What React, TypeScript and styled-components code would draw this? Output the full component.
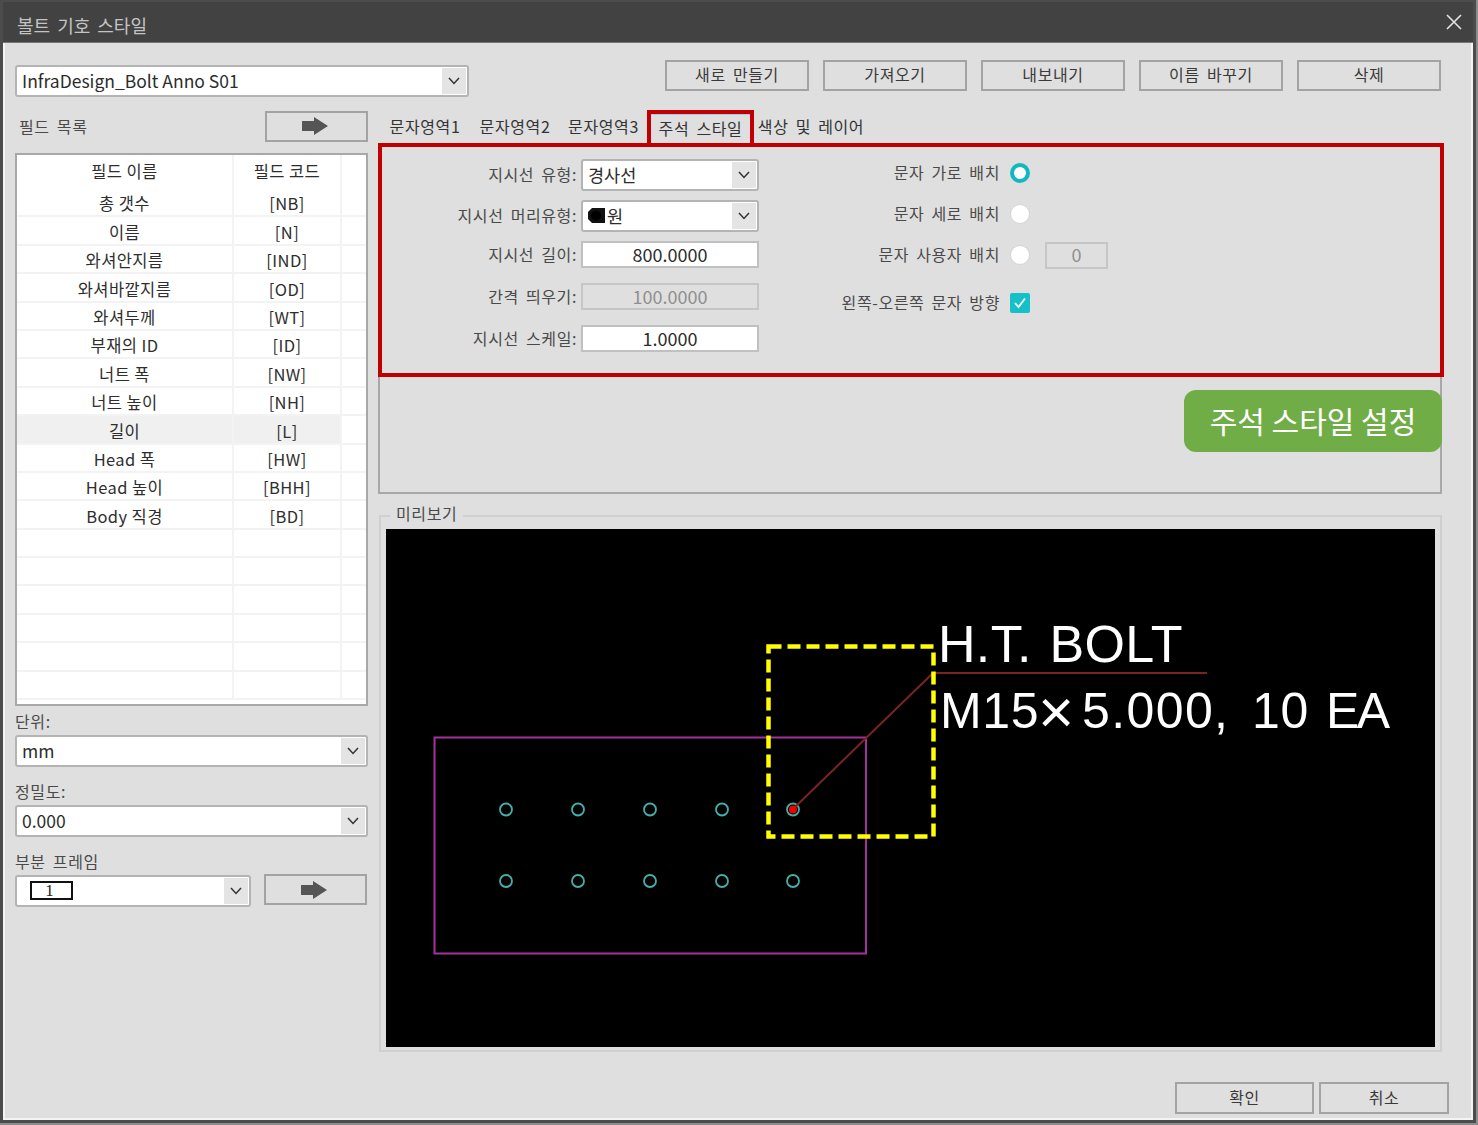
import React from "react";
import styled, { createGlobalStyle } from "styled-components";

const GlobalStyle = createGlobalStyle`
  html, body {
    margin: 0;
    padding: 0;
    background: #8c8c8c;
  }
  * {
    box-sizing: border-box;
  }
  body {
    font-family: "Noto Sans CJK KR", "Noto Sans", sans-serif;
    letter-spacing: 0.6px;
    word-spacing: 3px;
    color: #333;
  }
`;

const Page = styled.div`
  width: 1478px;
  height: 1125px;
  background: #8c8c8c;
`;

const Dialog = styled.div`
  width: 1476px;
  height: 1123px;
  border: 3px solid #4c4c4c;
  border-top-width: 2px;
  background: #dfdfdf;
  display: flex;
  flex-direction: column;
  overflow: hidden;
`;

const TitleBar = styled.div`
  height: 41px;
  flex: none;
  background: #424242;
  color: #c4c4c4;
  font-size: 18px;
  letter-spacing: 0;
  display: flex;
  align-items: center;
  justify-content: space-between;
  padding: 6px 11px 0 14px;
  border-bottom: 1px solid #777;
`;

const CloseIcon = styled.svg`
  margin-top: -6px;
`;

const Body = styled.div`
  flex: 1;
  padding: 17px 0 0 10px;
  border-left: 2px solid #f4f4f4;
  border-right: 2px solid #f4f4f4;
  border-bottom: 2px solid #f4f4f4;
  display: flex;
  flex-direction: column;
`;

const TopRow = styled.div`
  display: flex;
  height: 50px;
  align-items: flex-start;
`;

const ButtonGroup = styled.div`
  display: flex;
  gap: 14px;
  margin-left: 196px;
`;

const Button = styled.button<{ $w: number; $h?: number }>`
  width: ${(p) => p.$w}px;
  height: ${(p) => p.$h ?? 31}px;
  flex: none;
  padding: 0 0 3px;
  background: #dfdfdf;
  border: 2px solid #a3a3a3;
  color: #3a3a3a;
  font-family: inherit;
  font-size: 16px;
  letter-spacing: inherit;
  word-spacing: inherit;
  display: flex;
  align-items: center;
  justify-content: center;
`;

const ArrowButton = styled(Button)<{ $lift?: boolean }>`
  padding: 0 3px 0 0;
  margin-top: ${(p) => (p.$lift ? "-1px" : "0")};
`;

const Combo = styled.div<{ $w: number; $mt?: number }>`
  width: ${(p) => p.$w}px;
  height: 32px;
  margin-top: ${(p) => p.$mt ?? 0}px;
  flex: none;
  background: #fff;
  border: 2px solid #b4b4b4;
  border-radius: 3px;
  display: flex;
  align-items: center;
  padding-left: 5px;
  font-size: 17.5px;
  letter-spacing: 0;
  word-spacing: 0;
  color: #2c2c2c;
`;

const ComboValue = styled.div`
  flex: 1;
  display: flex;
  align-items: center;
  gap: 1px;
  padding-bottom: 1px;
  white-space: nowrap;
`;

const ComboArrow = styled.div`
  width: 24px;
  height: 26px;
  margin-right: 1px;
  background: #e4e4e4;
  display: flex;
  align-items: center;
  justify-content: center;
  flex: none;
`;

const Columns = styled.div`
  display: flex;
  gap: 10px;
`;

const LeftColumn = styled.div`
  width: 353px;
  flex: none;
`;

const FieldHead = styled.div`
  display: flex;
  align-items: center;
  justify-content: space-between;
  height: 32px;
  margin-bottom: 11px;
  padding-left: 4px;
  font-size: 16px;
  color: #4a4a4a;
`;

const FieldTable = styled.div`
  height: 553px;
  background: #fff;
  border: 2px solid #a8a8a8;
  overflow: hidden;
`;

const TableRow = styled.div<{ $head?: boolean }>`
  display: grid;
  grid-template-columns: 217px 108px 1fr;
  height: ${(p) => (p.$head ? "34px" : "28.4px")};
  border-bottom: ${(p) => (p.$head ? "none" : "2px solid #f3f3f3")};
  font-size: 16.5px;
  letter-spacing: 0.4px;
  word-spacing: 0;
  line-height: 1;
  color: #2e2e2e;
`;

const TableCell = styled.div<{ $selected?: boolean; $edge?: boolean; $head?: boolean }>`
  display: flex;
  align-items: center;
  justify-content: center;
  white-space: nowrap;
  padding: ${(p) => (p.$head ? "0 0 2px" : "3px 0 0")};
  background: ${(p) => (p.$selected ? "#f0f0f0" : "transparent")};
  border-right: ${(p) => (p.$edge ? "none" : "2px solid #f3f3f3")};
`;

const FieldGroup = styled.div<{ $mt: number }>`
  margin-top: ${(p) => p.$mt}px;
`;

const FieldLabel = styled.div`
  height: 20px;
  margin-bottom: 4px;
  font-size: 16px;
  line-height: 20px;
  color: #4a4a4a;
`;

const FrameRow = styled.div`
  display: flex;
  align-items: flex-start;
  justify-content: space-between;
  width: 352px;
`;

const FrameSwatch = styled.span`
  width: 43px;
  height: 19px;
  margin-left: 8px;
  padding-right: 4px;
  border: 2px solid #111;
  display: flex;
  align-items: center;
  justify-content: center;
  font-family: "Liberation Serif", serif;
  font-size: 17px;
  line-height: 15px;
  color: #222;
`;

const RightColumn = styled.div`
  width: 1064px;
  flex: none;
`;

const TabBar = styled.div`
  display: flex;
  height: 33px;
  padding-left: 2px;
  align-items: stretch;
`;

const Tab = styled.div<{ $w: number; $active?: boolean }>`
  width: ${(p) => p.$w}px;
  flex: none;
  display: flex;
  align-items: center;
  justify-content: center;
  font-size: 16px;
  white-space: nowrap;
  color: #333;
  border: ${(p) => (p.$active ? "4px solid #c00000" : "none")};
  border-bottom: none;
  box-shadow: ${(p) => (p.$active ? "inset 0 1px 0 #a9c8ea" : "none")};
  padding-bottom: 2px;
`;

const TabPane = styled.div`
  position: relative;
  height: 351px;
  border: 2px solid #a8a8a8;
  border-top: none;
`;

const FormBox = styled.div`
  height: 234px;
  margin: 0 -4px 0 -2px;
  border: 4px solid #c00000;
  display: flex;
`;

const FormLeft = styled.div`
  width: 377px;
  flex: none;
  padding-top: 12px;
  display: flex;
  flex-direction: column;
`;

const FormRow = styled.div<{ $mt?: number }>`
  display: flex;
  align-items: center;
  gap: 4px;
  margin-top: ${(p) => p.$mt ?? 0}px;
`;

const FormLabel = styled.div<{ $low?: boolean }>`
  width: 195px;
  flex: none;
  padding-bottom: ${(p) => (p.$low ? "1px" : "3px")};
  text-align: right;
  font-size: 16px;
  color: #4a4a4a;
  white-space: nowrap;
`;

const NumberInput = styled.div<{ $w?: number; $disabled?: boolean }>`
  width: ${(p) => p.$w ?? 178}px;
  height: 27px;
  flex: none;
  padding-bottom: 2px;
  background: ${(p) => (p.$disabled ? "#dfdfdf" : "#fff")};
  border: 2px solid ${(p) => (p.$disabled ? "#c6c6c6" : "#c0c0c0")};
  display: flex;
  align-items: center;
  justify-content: center;
  font-size: 18px;
  letter-spacing: 0;
  color: ${(p) => (p.$disabled ? "#8f8f8f" : "#2c2c2c")};
`;

const FormRight = styled.div`
  padding-top: 10px;
  display: flex;
  flex-direction: column;
`;

const OptionRow = styled.div<{ $mt?: number }>`
  height: 32px;
  margin-top: ${(p) => p.$mt ?? 0}px;
  display: flex;
  align-items: center;
`;

const OptionLabel = styled.div`
  width: 241px;
  flex: none;
  padding-bottom: 2px;
  text-align: right;
  font-size: 16px;
  color: #4a4a4a;
  white-space: nowrap;
`;

const Radio = styled.span<{ $on?: boolean }>`
  width: 20px;
  height: 20px;
  margin: 0 15px 0 10px;
  flex: none;
  border-radius: 50%;
  background: #fff;
  border: ${(p) => (p.$on ? "4px solid #12b8c0" : "1px solid #d4d4d4")};
`;

const CheckBox = styled.span`
  width: 20px;
  height: 20px;
  margin-left: 10px;
  flex: none;
  background: #14c1c9;
  border-radius: 2px;
  display: flex;
  align-items: center;
  justify-content: center;
`;

const Badge = styled.div`
  position: absolute;
  top: 247px;
  right: -2px;
  width: 258px;
  height: 62px;
  padding-bottom: 2px;
  background: #70ad47;
  border-radius: 12px;
  color: #fff;
  font-size: 30px;
  letter-spacing: 0;
  word-spacing: 0;
  display: flex;
  align-items: center;
  justify-content: center;
`;

const PreviewGroup = styled.div`
  position: relative;
  margin: 21px 0 0 1px;
  height: 537px;
  border: 2px solid #cfcfcf;
  padding: 12px 5px 3px 5px;
`;

const PreviewLegend = styled.div`
  position: absolute;
  top: -16px;
  left: 9px;
  padding: 0 6px;
  background: #dfdfdf;
  font-size: 16px;
  line-height: 24px;
  color: #4a4a4a;
`;

const Canvas = styled.svg`
  display: block;
  width: 1049px;
  height: 518px;
  background: #000;
`;

const Footer = styled.div`
  display: flex;
  justify-content: flex-end;
  gap: 5px;
  margin-top: 30px;
  padding-right: 22px;
`;

const Chevron = () => (
  <svg width="12" height="8" viewBox="0 0 12 8">
    <polyline points="1,1 6,6.5 11,1" fill="none" stroke="#333" strokeWidth="1.5" />
  </svg>
);

const BlockArrow = () => (
  <svg width="26" height="18" viewBox="0 0 26 18">
    <polygon points="0,4 12,4 12,0 26,9 12,18 12,14 0,14" fill="#555" />
  </svg>
);

const ComboBox = ({ w, mt, children }: { w: number; mt?: number; children: React.ReactNode }) => (
  <Combo $w={w} $mt={mt}>
    <ComboValue>{children}</ComboValue>
    <ComboArrow>
      <Chevron />
    </ComboArrow>
  </Combo>
);

const fields = [
  ["총 갯수", "[NB]"],
  ["이름", "[N]"],
  ["와셔안지름", "[IND]"],
  ["와셔바깥지름", "[OD]"],
  ["와셔두께", "[WT]"],
  ["부재의 ID", "[ID]"],
  ["너트 폭", "[NW]"],
  ["너트 높이", "[NH]"],
  ["길이", "[L]"],
  ["Head 폭", "[HW]"],
  ["Head 높이", "[BHH]"],
  ["Body 직경", "[BD]"],
  ["", ""],
  ["", ""],
  ["", ""],
  ["", ""],
  ["", ""],
  ["", ""],
];

const holeXs = [506, 578, 650, 722, 793];

const PreviewDrawing = () => (
  <Canvas viewBox="386 529 1049 518">
    <rect x="434.5" y="737.5" width="431.5" height="216" fill="none" stroke="#a3329c" strokeWidth="2" />
    {holeXs.map((x) => (
      <React.Fragment key={x}>
        <circle cx={x} cy="809.5" r="6" fill="none" stroke="#45aeaa" strokeWidth="1.8" />
        <circle cx={x} cy="881" r="6" fill="none" stroke="#45aeaa" strokeWidth="1.8" />
      </React.Fragment>
    ))}
    <polyline points="793,809 933,673 1207,673" fill="none" stroke="#7c2323" strokeWidth="2" />
    <circle cx="793" cy="809.5" r="4" fill="#f00000" />
    <rect x="768.5" y="646.5" width="165" height="190" fill="none" stroke="#ffff00" strokeWidth="4.5" strokeDasharray="13 6" />
    <text x="938" y="662" fill="#fff" fontFamily="Liberation Sans" fontSize="52" textLength="245">
      H.T. BOLT
    </text>
    <text y="728" fill="#fff" fontFamily="Liberation Sans" fontSize="50">
      <tspan x="940">M15</tspan>
      <tspan x="1038" fontSize="62" dy="5">×</tspan>
      <tspan x="1082" dy="-5" letterSpacing="1.4">5.000,</tspan>
      <tspan x="1252">10</tspan>
      <tspan x="1326" letterSpacing="-2.5">EA</tspan>
    </text>
  </Canvas>
);

export default function App() {
  return (
    <Page>
      <GlobalStyle />
      <Dialog>
        <TitleBar>
          <span>볼트 기호 스타일</span>
          <CloseIcon width="16" height="16" viewBox="0 0 16 16">
            <path d="M1 1 L15 15 M15 1 L1 15" stroke="#e4e4e4" strokeWidth="1.6" />
          </CloseIcon>
        </TitleBar>
        <Body>
          <TopRow>
            <ComboBox w={454} mt={5}>
              InfraDesign_Bolt Anno S01
            </ComboBox>
            <ButtonGroup>
              <Button $w={144}>새로 만들기</Button>
              <Button $w={144}>가져오기</Button>
              <Button $w={144}>내보내기</Button>
              <Button $w={144}>이름 바꾸기</Button>
              <Button $w={144}>삭제</Button>
            </ButtonGroup>
          </TopRow>
          <Columns>
            <LeftColumn>
              <FieldHead>
                <span>필드 목록</span>
                <ArrowButton $w={103}>
                  <BlockArrow />
                </ArrowButton>
              </FieldHead>
              <FieldTable>
                <TableRow $head>
                  <TableCell $head>필드 이름</TableCell>
                  <TableCell $head>필드 코드</TableCell>
                  <TableCell $edge />
                </TableRow>
                {fields.map(([name, code], i) => (
                  <TableRow key={i}>
                    <TableCell $selected={name === "길이"}>{name}</TableCell>
                    <TableCell $selected={name === "길이"}>{code}</TableCell>
                    <TableCell $edge />
                  </TableRow>
                ))}
              </FieldTable>
              <FieldGroup $mt={5}>
                <FieldLabel>단위:</FieldLabel>
                <ComboBox w={353}>mm</ComboBox>
              </FieldGroup>
              <FieldGroup $mt={14}>
                <FieldLabel>정밀도:</FieldLabel>
                <ComboBox w={353}>0.000</ComboBox>
              </FieldGroup>
              <FieldGroup $mt={14}>
                <FieldLabel>부분 프레임</FieldLabel>
                <FrameRow>
                  <ComboBox w={236}>
                    <FrameSwatch>1</FrameSwatch>
                  </ComboBox>
                  <ArrowButton $w={103} $lift>
                    <BlockArrow />
                  </ArrowButton>
                </FrameRow>
              </FieldGroup>
            </LeftColumn>
            <RightColumn>
              <TabBar>
                <Tab $w={90}>문자영역1</Tab>
                <Tab $w={90}>문자영역2</Tab>
                <Tab $w={87}>문자영역3</Tab>
                <Tab $w={107} $active>
                  주석 스타일
                </Tab>
                <Tab $w={114}>색상 및 레이어</Tab>
              </TabBar>
              <TabPane>
                <FormBox>
                  <FormLeft>
                    <FormRow>
                      <FormLabel>지시선 유형:</FormLabel>
                      <ComboBox w={178}>경사선</ComboBox>
                    </FormRow>
                    <FormRow $mt={9}>
                      <FormLabel>지시선 머리유형:</FormLabel>
                      <ComboBox w={178}>
                        <svg width="18" height="16" viewBox="0 0 18 16">
                          <rect width="17" height="15" fill="#111" />
                          <path d="M0 0 H4 L0 4 Z M0 15 H4 L0 11 Z" fill="#fff" />
                          <circle cx="8" cy="7.5" r="5" fill="#000" />
                        </svg>
                        원
                      </ComboBox>
                    </FormRow>
                    <FormRow $mt={9}>
                      <FormLabel $low>지시선 길이:</FormLabel>
                      <NumberInput>800.0000</NumberInput>
                    </FormRow>
                    <FormRow $mt={15}>
                      <FormLabel $low>간격 띄우기:</FormLabel>
                      <NumberInput $disabled>100.0000</NumberInput>
                    </FormRow>
                    <FormRow $mt={15}>
                      <FormLabel $low>지시선 스케일:</FormLabel>
                      <NumberInput>1.0000</NumberInput>
                    </FormRow>
                  </FormLeft>
                  <FormRight>
                    <OptionRow>
                      <OptionLabel>문자 가로 배치</OptionLabel>
                      <Radio $on />
                    </OptionRow>
                    <OptionRow $mt={9}>
                      <OptionLabel>문자 세로 배치</OptionLabel>
                      <Radio />
                    </OptionRow>
                    <OptionRow $mt={9}>
                      <OptionLabel>문자 사용자 배치</OptionLabel>
                      <Radio />
                      <NumberInput $w={63} $disabled>
                        0
                      </NumberInput>
                    </OptionRow>
                    <OptionRow $mt={16}>
                      <OptionLabel>왼쪽-오른쪽 문자 방향</OptionLabel>
                      <CheckBox>
                        <svg width="14" height="12" viewBox="0 0 14 12">
                          <polyline points="2,6 5.5,10 12,1.5" fill="none" stroke="#fff" strokeWidth="1.8" />
                        </svg>
                      </CheckBox>
                    </OptionRow>
                  </FormRight>
                </FormBox>
                <Badge>주석 스타일 설정</Badge>
              </TabPane>
              <PreviewGroup>
                <PreviewLegend>미리보기</PreviewLegend>
                <PreviewDrawing />
              </PreviewGroup>
            </RightColumn>
          </Columns>
          <Footer>
            <Button $w={139} $h={32}>
              확인
            </Button>
            <Button $w={130} $h={32}>
              취소
            </Button>
          </Footer>
        </Body>
      </Dialog>
    </Page>
  );
}
